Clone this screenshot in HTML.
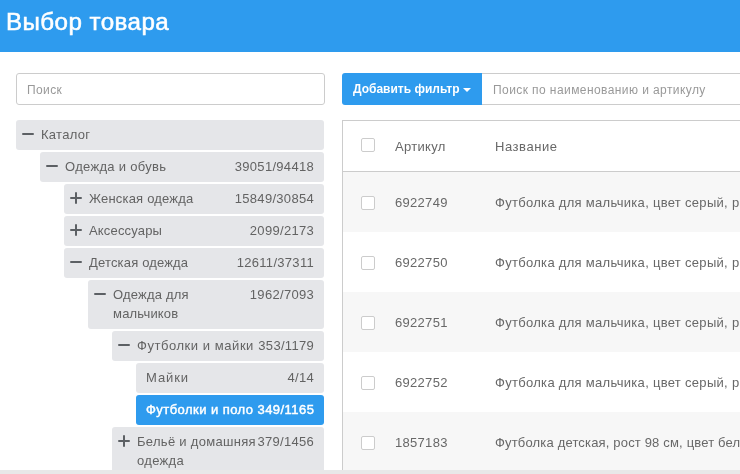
<!DOCTYPE html>
<html><head><meta charset="utf-8">
<style>
*{box-sizing:border-box;margin:0;padding:0}
html,body{width:740px;height:474px;overflow:hidden;background:#fff;font-family:"Liberation Sans",sans-serif;color:#555}
.wrap{position:absolute;left:0;top:0;width:740px;height:474px;will-change:transform}
.hdr{position:absolute;left:0;top:0;width:740px;height:52px;background:#2e9bee}
.hdr h1{position:absolute;left:6px;top:7px;font-size:23px;font-weight:normal;color:#fff;line-height:30px;white-space:nowrap;letter-spacing:0.42px;-webkit-text-stroke:0.5px #fff;transform:scaleX(1.05);transform-origin:0 0}
.search{position:absolute;left:16px;top:73px;width:309px;height:32px;border:1px solid #ccc;border-radius:3px}
.search span{position:absolute;left:10px;top:8px;font-size:12px;color:#999;line-height:16px;letter-spacing:0.4px}
.t{position:absolute;height:30px;background:#e5e6e9;border-radius:3px;font-size:13px;color:#636363;line-height:16px;letter-spacing:0.3px}
.lb{position:absolute;top:7px;white-space:nowrap}
.ct{position:absolute;right:10px;top:7px;white-space:nowrap}
.mi{position:absolute;width:12px;height:2.8px;background:#5c6064;top:12.6px;left:6px;border-radius:1px}
.pl{position:absolute;width:12px;height:12px;top:8px;left:6px}
.pl:before{content:"";position:absolute;left:0;top:4.6px;width:12px;height:2.8px;background:#5c6064;border-radius:1px}
.pl:after{content:"";position:absolute;top:0;left:4.6px;height:12px;width:2.8px;background:#5c6064;border-radius:1px}
.btn{position:absolute;left:342px;top:73px;width:140px;height:32px;background:#2e9bee;border-radius:3px 0 0 3px;color:#fff;font-weight:bold;font-size:12px;line-height:16px}
.btn span{position:absolute;left:11px;top:8px;white-space:nowrap;letter-spacing:0px}
.caret{position:absolute;left:463px;top:88px;width:0;height:0;border-left:4px solid transparent;border-right:4px solid transparent;border-top:4px solid #fff}
.q{position:absolute;left:482px;top:73px;width:270px;height:32px;border:1px solid #ccc;border-left:none}
.q span{position:absolute;left:11px;top:8px;font-size:12px;color:#999;white-space:nowrap;line-height:16px;letter-spacing:0.42px}
.tbl{position:absolute;left:342px;top:120px;width:420px;height:360px;border:1px solid #ccc;border-right:none;border-bottom:none}
.row{position:absolute;left:0;width:420px;height:60px}
.cb{position:absolute;left:18px;width:14px;height:14px;border:1px solid #ccc;border-radius:2px;background:#fff}
.row .a{position:absolute;left:52px;font-size:13px;white-space:nowrap;line-height:16px;letter-spacing:0.3px;color:#686868}
.row .n{position:absolute;left:152px;font-size:13px;white-space:nowrap;line-height:16px;letter-spacing:0.3px;color:#686868}
.bar{position:absolute;left:0;top:470px;width:740px;height:4px;background:#e8e8e8}
</style></head><body><div class="wrap">
<div class="hdr"><h1>Выбор товара</h1></div>
<div class="search"><span>Поиск</span></div>

<div class="t" style="left:16px;top:120px;width:308px"><i class="mi"></i><span class="lb" style="left:25px">Каталог</span></div>
<div class="t" style="left:40px;top:152px;width:284px"><i class="mi"></i><span class="lb" style="left:25px">Одежда и обувь</span><span class="ct">39051/94418</span></div>
<div class="t" style="left:64px;top:184px;width:260px"><i class="pl"></i><span class="lb" style="left:25px;letter-spacing:0.19px">Женская одежда</span><span class="ct">15849/30854</span></div>
<div class="t" style="left:64px;top:216px;width:260px"><i class="pl"></i><span class="lb" style="left:25px;letter-spacing:0.17px">Аксессуары</span><span class="ct">2099/2173</span></div>
<div class="t" style="left:64px;top:248px;width:260px"><i class="mi"></i><span class="lb" style="left:25px;letter-spacing:0.17px">Детская одежда</span><span class="ct">12611/37311</span></div>
<div class="t" style="left:88px;top:280px;width:236px;height:49px"><i class="mi"></i><span class="lb" style="left:25px;line-height:19px;top:5px;letter-spacing:0.19px">Одежда для<br>мальчиков</span><span class="ct">1962/7093</span></div>
<div class="t" style="left:112px;top:331px;width:212px"><i class="mi"></i><span class="lb" style="left:25px;letter-spacing:0.55px">Футболки и майки</span><span class="ct">353/1179</span></div>
<div class="t" style="left:136px;top:363px;width:188px"><span class="lb" style="left:10px;letter-spacing:0.9px">Майки</span><span class="ct">4/14</span></div>
<div class="t" style="left:136px;top:395px;width:188px;background:#2e9bee;color:#fff;font-weight:normal"><span class="lb" style="left:10px;letter-spacing:0.45px;-webkit-text-stroke:0.45px #fff">Футболки и поло 349/1165</span></div>
<div class="t" style="left:112px;top:427px;width:212px;height:49px"><i class="pl"></i><span class="lb" style="left:25px;line-height:19px;top:5px;letter-spacing:0.3px">Бельё и домашняя<br>одежда</span><span class="ct">379/1456</span></div>

<div class="btn"><span>Добавить фильтр</span></div>
<div class="caret"></div>
<div class="q"><span>Поиск по наименованию и артикулу</span></div>
<div class="tbl">
  <div class="row" style="top:0;height:51px;border-bottom:1px solid #ccc"><div class="cb" style="top:17px"></div><span class="a" style="top:18px">Артикул</span><span class="n" style="top:18px;letter-spacing:0.55px">Название</span></div>
  <div class="row" style="top:51px;background:#f7f7f7"><div class="cb" style="top:24px"></div><span class="a" style="top:23px">6922749</span><span class="n" style="top:23px">Футболка для мальчика, цвет серый, рост</span></div>
  <div class="row" style="top:111px"><div class="cb" style="top:24px"></div><span class="a" style="top:23px">6922750</span><span class="n" style="top:23px">Футболка для мальчика, цвет серый, рост</span></div>
  <div class="row" style="top:171px;background:#f7f7f7"><div class="cb" style="top:24px"></div><span class="a" style="top:23px">6922751</span><span class="n" style="top:23px">Футболка для мальчика, цвет серый, рост</span></div>
  <div class="row" style="top:231px"><div class="cb" style="top:24px"></div><span class="a" style="top:23px">6922752</span><span class="n" style="top:23px">Футболка для мальчика, цвет серый, рост</span></div>
  <div class="row" style="top:291px;background:#f7f7f7"><div class="cb" style="top:24px"></div><span class="a" style="top:23px">1857183</span><span class="n" style="top:23px;letter-spacing:0.17px">Футболка детская, рост 98 см, цвет белый</span></div>
</div>
<div class="bar"></div>
</div></body></html>
